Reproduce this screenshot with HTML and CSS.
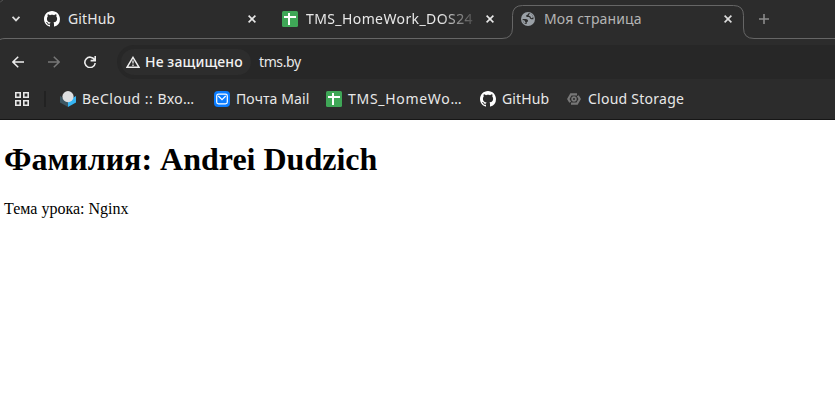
FILE: index.html
```html
<!DOCTYPE html>
<html lang="ru">
<head>
<meta charset="utf-8">
<title>Моя страница</title>
<link rel="stylesheet" href="styles.css">
</head>
<body>
<svg class="defs" width="0" height="0" aria-hidden="true">
  <symbol id="github" viewBox="0 0 16 16"><path d="M8 0C3.58 0 0 3.58 0 8c0 3.54 2.29 6.53 5.47 7.59.4.07.55-.17.55-.38 0-.19-.01-.82-.01-1.49-2.01.37-2.53-.49-2.69-.94-.09-.23-.48-.94-.82-1.13-.28-.15-.68-.52-.01-.53.63-.01 1.08.58 1.23.82.72 1.21 1.87.87 2.33.66.07-.52.28-.87.51-1.07-1.78-.2-3.64-.89-3.64-3.95 0-.87.31-1.59.82-2.15-.08-.2-.36-1.02.08-2.12 0 0 .67-.21 2.2.82.64-.18 1.32-.27 2-.27s1.36.09 2 .27c1.53-1.04 2.2-.82 2.2-.82.44 1.1.16 1.92.08 2.12.51.56.82 1.27.82 2.15 0 3.07-1.87 3.75-3.65 3.95.29.25.54.73.54 1.48 0 1.07-.01 1.93-.01 2.2 0 .21.15.46.55.38A8.01 8.01 0 0 0 16 8c0-4.42-3.58-8-8-8z" fill="#fff"/></symbol>
  <symbol id="sheet" viewBox="0 0 16 16"><rect width="16" height="16" rx="1.5" fill="#3fa757"/><path d="M7 2V14M2 6H14" stroke="#fff" stroke-width="2" fill="none"/></symbol>
  <symbol id="close" viewBox="0 0 8 8"><path d="M.6.6 7.400 7.400M7.400.6.6 7.400" stroke="currentColor" stroke-width="1.6"/></symbol>
</svg>

<header class="browser">
  <div class="tabstrip">
    <svg class="outline" width="835" height="42" fill="none" stroke="#666" stroke-width="1"><path d="M0 39.500Q2 38.500 5 38.500H502Q512.500 38.500 512.500 28V15.500Q512.500 5.500 522.500 5.500H733.500Q743.500 5.500 743.500 15.500V28Q743.500 38.500 754 38.500H835"/><path d="M0 2.500Q1 1 3 0" stroke="#555"/></svg>
    <svg class="chevron" viewBox="0 0 8 6" width="8" height="6"><path d="M.6.8 4 4.400 7.400.8" fill="none" stroke="#ddd" stroke-width="1.7"/></svg>
    <div class="tab tab-github"><svg width="16" height="16"><use href="#github"/></svg><span class="title t-github">GitHub</span><svg class="close" width="8" height="8"><use href="#close"/></svg></div>
    <div class="tab tab-sheet"><svg width="16" height="16"><use href="#sheet"/></svg><span class="title t-sheet">TMS_HomeWork_DOS24</span><svg class="close" width="8" height="8"><use href="#close"/></svg></div>
    <div class="tab tab-page"><svg width="16" height="16" viewBox="0 0 16 16"><circle cx="8" cy="8" r="7" fill="#9aa0a6"/><path d="M9.200 2C8 2 8.500 3.500 7.200 3.800 5.600 4 5.800 6 7.500 6H9.300C9.800 7.800 10.800 8.500 13.500 8.300L13.300 6 12 3.700Z" fill="#2c2c2c"/><path d="M10 2.300 12 3.700 13.200 6.300 11.300 7.200 10.300 5.200 8.500 4.500Z" fill="#9aa0a6"/><path d="M2.500 8H5.500C7.500 8 8.300 9 8 10.500L6.800 11V12.800L5 13 3 10.800Z" fill="#2c2c2c"/><path d="M2 8.800 4.500 9.600 5.400 11.200 5 13Z" fill="#9aa0a6"/></svg><span class="title t-page">Моя страница</span><svg class="close" width="8" height="8"><use href="#close"/></svg></div>
    <svg class="plus" width="10" height="10"><path d="M5 0V10M0 5H10" stroke="#8c8c8c" stroke-width="1.600"/></svg>
  </div>

  <div class="toolbar">
    <div class="nav">
      <svg width="12" height="12" viewBox="0 0 12 12" fill="none" stroke="#eee" stroke-width="1.500"><path d="M12 6H1M6.200.7.9 6 6.200 11.300"/></svg>
      <svg width="12" height="12" viewBox="0 0 12 12" fill="none" stroke="#777" stroke-width="1.500"><path d="M0 6H11M5.800.7 11.100 6 5.800 11.300"/></svg>
      <svg width="12" height="12" viewBox="0 0 12 12" fill="none" stroke="#eee" stroke-width="1.600"><path d="M10.500 3.700A5.200 5.200 0 1 0 11.200 7M11.200 0V4.600H6.600"/></svg>
    </div>
    <div class="omnibox">
      <div class="chip"><svg width="14" height="12" viewBox="0 0 14 12"><path d="M7 1.300 13 11.300H1Z" fill="none" stroke="#eee" stroke-width="1.400"/><path d="M7 4.500V7.500M7 8.500V10" stroke="#eee" stroke-width="1.300"/></svg><span class="t-insecure">Не защищено</span></div>
      <span class="url">tms.by</span>
    </div>
  </div>

  <nav class="bookmarks">
    <svg class="apps" width="14" height="14" fill="none" stroke="#e8e8e8" stroke-width="1.600"><path d="M.8.8H5.200V5.200H.8ZM8.800.8H13.200V5.200H8.800ZM.8 8.800H5.200V13.200H.8ZM8.800 8.800H13.200V13.200H8.800Z"/></svg>
    <i class="divider"></i>
    <a class="mark m-cloud"><svg width="16" height="16" viewBox="0 0 16 16"><path d="M0 5 8 9.500V16L0 11.500Z" fill="#3d5662"/><path d="M16 5 8 9.500V16L16 11.500Z" fill="#36b4f2"/><circle cx="8" cy="5.600" r="5.600" fill="#dedfe1"/></svg><span>BeCloud :: Вхо…</span></a>
    <a class="mark m-mail"><svg width="16" height="16" viewBox="0 0 16 16"><rect width="16" height="16" rx="4" fill="#0a7cff"/><rect x="2.700" y="3.200" width="10.600" height="9.600" rx="1.800" fill="none" stroke="#fff" stroke-width="1.200"/><path d="M4.300 5 8 8.700 11.700 5" fill="none" stroke="#fff" stroke-width="1.200"/></svg><span>Почта Mail</span></a>
    <a class="mark m-sheet"><svg width="16" height="16"><use href="#sheet"/></svg><span>TMS_HomeWo…</span></a>
    <a class="mark m-github"><svg width="16" height="16"><use href="#github"/></svg><span>GitHub</span></a>
    <a class="mark m-storage"><svg width="16" height="16" viewBox="0 0 16 16" fill="none" stroke="#777" stroke-width="2.200"><path d="M11 3.300H5L2.300 8 4.200 11.300M5 12.700H11L13.700 8 11.800 4.700"/><circle cx="8" cy="8" r="1.900" stroke-width="1.700"/></svg><span>Cloud Storage</span></a>
  </nav>
</header>

<main class="page">
  <h1>Фамилия: Andrei Dudzich</h1>
  <p>Тема урока: Nginx</p>
</main>
</body>
</html>
```

FILE: styles.css
```css
* { box-sizing: border-box; }
body { margin: 0; background: #fff; overflow: hidden; }
svg { display: block; flex: none; }
.defs { position: absolute; }
.browser {
  height: 120px;
  background: #2c2c2c;
  border-bottom: 1px solid #161616;
  color: #e8e8e8;
  font: 14px/20px "Noto Sans", "Open Sans", sans-serif;
  white-space: nowrap;
}
.tabstrip { position: relative; display: flex; align-items: center; height: 39px; padding: 0 0 1px 12px; }
.outline { position: absolute; left: 0; top: 0; }
.chevron { margin-right: 24px; }
.tab { display: flex; align-items: center; }
.tab-github { width: 212px; margin-right: 26px; }
.tab-sheet { width: 212px; margin-right: 26px; }
.tab-page { width: 212px; color: #b4b4b4; }
.title { margin-left: 8px; overflow: hidden; }
.t-github { letter-spacing: .1px; }
.t-page { letter-spacing: .15px; }
.t-sheet { width: 168px; letter-spacing: .4px; -webkit-mask-image: linear-gradient(to right, #000 134px, transparent 174px); mask-image: linear-gradient(to right, #000 134px, transparent 174px); }
.close { margin-left: auto; }
.tab-page .close { color: #ddd; }
.plus { margin-left: 27px; }
.toolbar { display: flex; height: 46px; padding: 6px 0 6px 12px; }
.nav { display: flex; align-items: center; gap: 24px; width: 105px; }
.omnibox { flex: 1; display: flex; align-items: center; padding-left: 4px; background: #272727; border-radius: 17px 0 0 17px; }
.chip { display: flex; align-items: center; gap: 5px; width: 130px; height: 26px; padding-left: 5px; border-radius: 13px; background: #2d2d2d; color: #f2f2f2; font-weight: 500; letter-spacing: .12px; }
.url { margin-left: 8px; letter-spacing: -.4px; }
.bookmarks { display: flex; align-items: center; height: 28px; padding-left: 15px; }
.divider { width: 2px; height: 16px; margin: 0 14px 0 15px; background: #222; }
.mark { display: flex; align-items: center; gap: 6px; }
.m-cloud { width: 154px; letter-spacing: .5px; }
.m-mail { width: 112px; letter-spacing: .1px; }
.m-sheet { width: 154px; letter-spacing: .7px; }
.m-github { width: 86px; letter-spacing: .1px; }
.m-storage { letter-spacing: .25px; }
.page { padding: 0 4px; color: #000; font: 16px/18px "Liberation Serif", serif; }
.page h1 { margin: 21px 0 22px; font-size: 32px; line-height: 37px; }
.page p { margin: 0; }
```
